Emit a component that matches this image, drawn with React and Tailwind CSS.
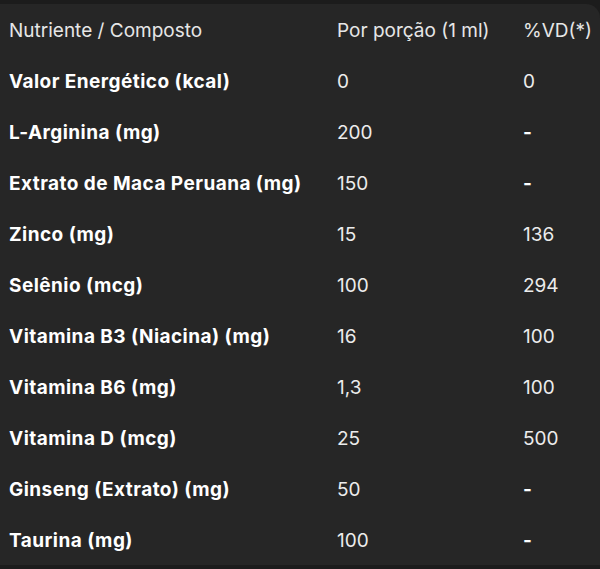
import React from 'react';

const rows = [
    ['Valor Energético (kcal)', '0', '0'],
    ['L-Arginina (mg)', '200', '-'],
    ['Extrato de Maca Peruana (mg)', '150', '-'],
    ['Zinco (mg)', '15', '136'],
    ['Selênio (mcg)', '100', '294'],
    ['Vitamina B3 (Niacina) (mg)', '16', '100'],
    ['Vitamina B6 (mg)', '1,3', '100'],
    ['Vitamina D (mcg)', '25', '500'],
    ['Ginseng (Extrato) (mg)', '50', '-'],
    ['Taurina (mg)', '100', '-'],
];

function App() {
    return (
        <div className="w-[600px] h-[569px] bg-[#1c1c1c] pt-[4px] overflow-hidden" style={{ fontFamily: 'Inter, "Noto Sans", sans-serif' }}>
            <div className="bg-[#262626] rounded-tr-[14px] h-[561px]">
                {/* header */}
                <div className="grid grid-cols-[328px_186px_1fr] h-[51px] items-center pl-[9px] pt-[4px] text-[19px] text-[#e6e6e6]">
                    <div>Nutriente / Composto</div>
                    <div>Por porção (1 ml)</div>
                    <div>%VD(*)</div>
                </div>
                {rows.map(([name, qty, vd]) => (
                    <div key={name} className="grid grid-cols-[328px_186px_1fr] h-[51px] items-center pl-[9px] pt-[4px] text-[19px] text-white">
                        <div className="font-bold tracking-[0.45px]">{name}</div>
                        <div className="text-[#ececec]">{qty}</div>
                        <div className={vd === '-' ? 'font-bold text-white' : 'text-[#ececec]'}>{vd}</div>
                    </div>
                ))}
            </div>
        </div>
    );
}

export default App;
